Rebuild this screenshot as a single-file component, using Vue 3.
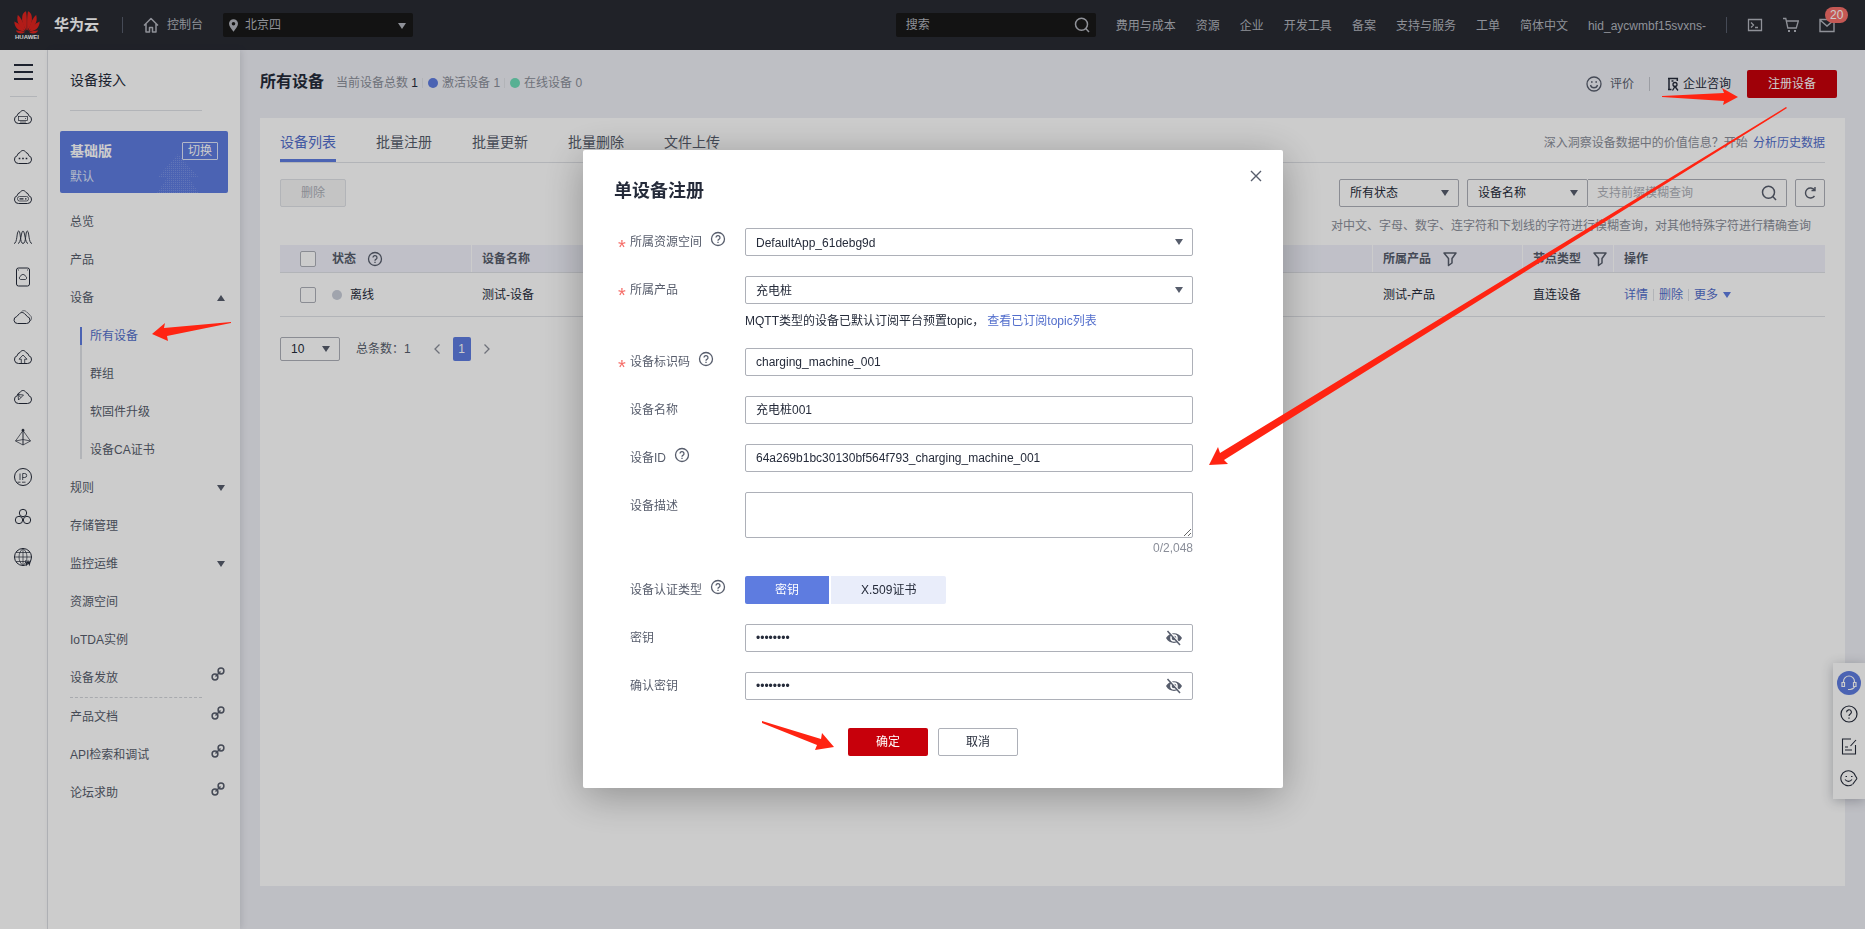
<script setup>
import { ref } from 'vue'

const cloud = '<path d="M5.500 16.500a4 4 0 0 1-1.300-7.800A3.800 3.800 0 0 1 7 5.500c.8-1.500 2-2 3-2s2.200.5 3 2a3.800 3.800 0 0 1 2.800 3.200 4 4 0 0 1-1.300 7.800z"/>'
const railIcons = [
  { name: '弹性云服务器', art: cloud + '<rect stroke-width=".7" x="5.500" y="9.500" width="9" height="4"/><path stroke-width=".7" d="M12 11.500h1M7 15h6"/>' },
  { name: '云服务', art: cloud + '<path stroke-width="1.600" d="M5.700 11.500h1.600M9.200 11.500h1.600M12.700 11.500h1.600"/>' },
  { name: '裸金属服务器', art: cloud + '<rect stroke-width=".7" x="4.500" y="9.500" width="11" height="4.500" rx="2"/><path stroke-width="1.200" d="M6.500 11.800h4M12 11.800h1.500"/>' },
  { name: '弹性伸缩', art: '<path stroke-width=".9" d="M1 16.500c3.500 0 2.500-12.500 4.700-12.500s1 12.500 4.300 12.500S12.300 4 14.300 4s1.200 12.500 4.700 12.500M5 16.500C8 16.500 8 4 10 4s2 12.500 5 12.500"/>' },
  { name: '存储', art: '<rect x="3.500" y="1" width="13" height="18" rx="2"/><path stroke-width=".8" d="M7.500 12.500a1.700 1.700 0 0 1 0-3.200 2.600 2.600 0 0 1 5 0 1.700 1.700 0 0 1 0 3.200zM5 3h1M14 3h1"/>' },
  { name: '云硬盘', art: '<path d="M4.500 16.500a3.500 3.500 0 0 1-.8-6.900c.8-1.200 1.500-1.800 2.300-2.300.8-1.300 2-1.800 3-1.800s2.200.5 3 1.800c1 .5 1.700 1.200 2.300 2.300a3.500 3.500 0 0 1-.8 6.900z"/><path stroke-width=".6" d="M8.500 4.500c1-1 4-1.500 5.500 1 1 .3 2 1.300 2.500 2.500 2.500 1 3 5-.5 6.800"/>' },
  { name: '上传', art: cloud + '<path stroke-width=".8" d="M8.300 16.200v-4H6L10 8l4 4.200h-2.300v4"/>' },
  { name: '云备份', art: cloud + '<path stroke-width=".8" d="M5 7.500l5.500.5-5 5zM5 7.500l2.800 3.100"/>' },
  { name: '虚拟私有云', art: '<path stroke-width=".7" d="M10 3.500L2.500 14 10 18l7.500-4zM2.500 14L10 12.500l7.500 1.500"/><path d="M10 3v15"/><circle cx="10" cy="3.200" r="1" fill="currentColor"/>' },
  { name: '弹性公网IP', art: '<circle cx="10" cy="10" r="8.500"/><path stroke-width=".8" d="M7 6.500v6.500M9.700 13V6.500h2a2 2 0 0 1 0 4h-2M4.500 15.200h3M9 15.200h3.500"/>' },
  { name: '容器', art: '<circle cx="10" cy="6" r="3.700"/><circle cx="6" cy="13" r="3.700"/><circle cx="14" cy="13" r="3.700"/>' },
  { name: '域名', art: '<circle cx="10" cy="10" r="8.500"/><path stroke-width=".7" d="M10 1.500c-5.300 4-5.300 13 0 17M10 1.500c5.300 4 5.300 13 0 17M1.500 10h17M3 5.500h14M3 14.500h9M10 1.500v17"/><path stroke-width="1.100" d="M12.500 13.500l1.200 4 1.300-3.500 1.300 3.500 1.200-4"/>' }
]

const topLinks = ['费用与成本', '资源', '企业', '开发工具', '备案', '支持与服务', '工单', '简体中文', 'hid_aycwmbf15svxns-']
const menu = [
  { label: '总览' },
  { label: '产品' },
  { label: '设备', arrow: 'up', children: ['所有设备', '群组', '软固件升级', '设备CA证书'] },
  { label: '规则', arrow: 'down' },
  { label: '存储管理' },
  { label: '监控运维', arrow: 'down' },
  { label: '资源空间' },
  { label: 'IoTDA实例' },
  { label: '设备发放', link: true },
  { label: '产品文档', link: true, split: true },
  { label: 'API检索和调试', link: true },
  { label: '论坛求助', link: true }
]
const tabs = ['设备列表', '批量注册', '批量更新', '批量删除', '文件上传']

const code = ref('charging_machine_001')
const deviceName = ref('充电桩001')
const deviceId = ref('64a269b1bc30130bf564f793_charging_machine_001')
const description = ref('')
const secret = ref('12345678')
const secretAgain = ref('12345678')
const authType = ref('密钥')
const petals = [
  'M12.700 19.500C9 15 7.500 10 8.200 6 8.500 3 10 .8 12 .3 13 5 13 13 12.700 19.500z',
  'M13.300 19.500C17 15 18.500 10 17.800 6 17.500 3 16 .8 14 .3 13 5 13 13 13.300 19.500z',
  'M11.800 19.800C6 16.500 1.800 11.500 3.800 4 7 6.500 10 13 11.800 19.800z',
  'M14.200 19.800C20 16.500 24.200 11.500 22.200 4 19 6.500 16 13 14.200 19.800z',
  'M11 20.500C5 20.500.5 17 .3 10.500 5 12.500 9 16.500 11 20.500z',
  'M15 20.500C21 20.500 25.500 17 25.700 10.500 21 12.500 17 16.500 15 20.500z',
  'M10.800 21.200C7 23.500 3.500 22.500 1.800 19.500 5 19.300 8 20.300 10.800 21.200z',
  'M15.200 21.200C19 23.500 22.500 22.500 24.200 19.500 21 19.300 18 20.300 15.200 21.200z'
]
</script>

<template>
  <div class="page">
    <svg class="defs" aria-hidden="true">
      <symbol id="help" viewBox="0 0 16 16"><g fill="none" stroke="currentColor" stroke-width="1.300"><circle cx="8" cy="8" r="6.500" /><path d="M6 6.600a2 2 0 1 1 2.900 1.800c-.6.300-.9.600-.9 1.300" /><path d="M8 10.800v1.300" /></g></symbol>
      <symbol id="caret" viewBox="0 0 8 6"><path d="M0 0h8L4 6z" fill="currentColor" /></symbol>
      <symbol id="filter" viewBox="0 0 16 16"><path d="M2 2h12L10 7.500V12l-3.500 2.500v-7z" fill="none" stroke="currentColor" stroke-width="1.500" stroke-linejoin="round" /></symbol>
      <symbol id="search" viewBox="0 0 16 16"><g fill="none" stroke="currentColor" stroke-width="1.500"><circle cx="7.500" cy="7.300" r="6" /><path d="M11.700 11.500l3.300 3.500" /></g></symbol>
      <symbol id="chain" viewBox="0 0 14 14"><g fill="none" stroke="currentColor" stroke-width="1.500"><circle cx="4" cy="10" r="2.900" /><circle cx="10" cy="4" r="2.900" /><path d="M4.500 9.500l5-5" /></g></symbol>
      <symbol id="smile" viewBox="0 0 16 16"><g fill="none" stroke="currentColor" stroke-width="1.300"><circle cx="8" cy="8" r="7" /><path d="M4.500 9a3.600 3.600 0 0 0 7 0" /><path stroke-width="1.600" d="M5 6h1.600M9.400 6H11" /></g></symbol>
      <symbol id="eye-off" viewBox="0 0 18 16"><path d="M1 8c3.500-6.500 12.500-6.500 16 0-3.500 6.500-12.500 6.500-16 0z" fill="currentColor" /><circle cx="9" cy="8" r="3.800" fill="#fff" /><circle cx="9" cy="8" r="2.300" fill="currentColor" /><path d="M4 1l12 14" stroke="#fff" stroke-width="1.500" /><path d="M2.500 1L15 15" stroke="currentColor" stroke-width="1.500" /></symbol>
    </svg>

    <header class="topbar">
      <svg class="logo" viewBox="0 0 26 28" role="img" aria-label="HUAWEI">
        <path v-for="petal in petals" :key="petal" :d="petal" fill="#e0231f" />
        <text x="13" y="28" text-anchor="middle" font-size="6" font-weight="bold" fill="#fff">HUAWEI</text>
      </svg>
      <strong class="brand">华为云</strong>
      <span class="bar-line brand-line"></span>
      <a class="console" href="#">
        <svg viewBox="0 0 16 16"><path d="M1 8.500L8 1.500l7 7M3 7v8h3.500v-4.500h3V15H13V7" fill="none" stroke="currentColor" stroke-width="1.500" stroke-linejoin="round" /></svg>控制台
      </a>
      <div class="region">
        <svg class="pin" viewBox="0 0 10 14"><path fill-rule="evenodd" d="M5 0a5 5 0 0 0-5 5c0 3 3 5.500 5 9 2-3.500 5-6 5-9a5 5 0 0 0-5-5zm0 3a2 2 0 1 1 0 4 2 2 0 0 1 0-4z" fill="currentColor" /></svg>
        <select aria-label="区域"><option>北京四</option></select>
        <svg class="caret"><use href="#caret" /></svg>
      </div>
      <div class="top-search">
        <input type="text" placeholder="搜索" aria-label="搜索">
        <svg><use href="#search" /></svg>
      </div>
      <nav class="top-links"><a v-for="t in topLinks" :key="t" href="#">{{ t }}</a></nav>
      <span class="bar-line"></span>
      <div class="top-icons">
        <button aria-label="CloudShell"><svg viewBox="0 0 16 16"><path d="M1.500 2.500h13v11h-13zM4 5.500L6.500 8 4 10.500M8 10.500h3" fill="none" stroke="currentColor" stroke-width="1.300" /></svg></button>
        <button aria-label="购物车"><svg viewBox="0 0 16 16"><path d="M0 1.500h2.800l2 9.500h8.500l2-7H3.500" fill="none" stroke="currentColor" stroke-width="1.300" /><path d="M5 13h2v2H5zM11 13h2v2h-2z" fill="currentColor" /></svg></button>
        <button class="mail" aria-label="消息"><svg viewBox="0 0 16 16"><path d="M1 2.500h14v12H1zM1 3l7 6 7-6" fill="none" stroke="currentColor" stroke-width="1.400" /></svg><span class="badge">20</span></button>
      </div>
    </header>

    <div class="body">
      <aside class="rail">
        <button class="burger" aria-label="服务列表"><i></i><i></i><i></i></button>
        <a v-for="icon in railIcons" :key="icon.name" href="#" :aria-label="icon.name"><svg viewBox="0 0 20 20" v-html="icon.art"></svg></a>
      </aside>

      <aside class="side">
        <h2>设备接入</h2>
        <div class="edition">
          <svg class="deco" viewBox="0 0 42 39" aria-hidden="true">
            <defs><pattern id="dots" width="2" height="2" patternUnits="userSpaceOnUse"><rect width="1" height="1" fill="#8ea3ea" /></pattern></defs>
            <path d="M21 0L42 24H32L42 39H0L10 24H0z" fill="url(#dots)" />
          </svg>
          <div class="edition-top"><strong>基础版</strong><button>切换</button></div>
          <span>默认</span>
        </div>
        <ul class="menu">
          <li v-for="m in menu" :key="m.label" :class="{ split: m.split }">
            <a class="item" href="#">{{ m.label }}
              <svg v-if="m.arrow" class="caret" :class="m.arrow"><use href="#caret" /></svg>
              <svg v-if="m.link" class="chain"><use href="#chain" /></svg>
            </a>
            <ul v-if="m.children" class="sub">
              <li v-for="(c, i) in m.children" :key="c" :class="{ active: i === 0 }"><a href="#">{{ c }}</a></li>
            </ul>
          </li>
        </ul>
      </aside>

      <main class="main">
        <div class="heading">
          <h1>所有设备</h1>
          <div class="stats">
            <span>当前设备总数 <b>1</b></span><span class="with-dot"><i class="dot blue"></i>激活设备 1</span><span class="with-dot"><i class="dot green"></i>在线设备 0</span>
          </div>
          <a class="rate" href="#"><svg><use href="#smile" /></svg>评价</a>
          <a class="consult" href="#"><svg viewBox="0 0 12 14"><path d="M10.300 4V1.500H2v11h2.500M1 1.500h3M1 12.500h3M4.500 4h2" fill="none" stroke="currentColor" stroke-width="1.500" /><circle cx="8" cy="7.500" r="2" fill="none" stroke="currentColor" stroke-width="1.300" /><path d="M5.500 13.500L8 9.500l3 4" fill="none" stroke="currentColor" stroke-width="1.300" /></svg>企业咨询</a>
          <button class="primary">注册设备</button>
        </div>

        <section class="panel">
          <div class="tabs">
            <button v-for="(t, i) in tabs" :key="t" :class="{ active: i === 0 }">{{ t }}</button>
            <p>深入洞察设备数据中的价值信息？开始 <a href="#">分析历史数据</a></p>
          </div>
          <div class="tools">
            <button class="delete" disabled>删除</button>
            <div class="select state"><select aria-label="状态"><option>所有状态</option></select><svg class="caret"><use href="#caret" /></svg></div>
            <div class="query">
              <div class="select"><select aria-label="查询字段"><option>设备名称</option></select><svg class="caret"><use href="#caret" /></svg></div>
              <div class="keyword"><input type="text" placeholder="支持前缀模糊查询" aria-label="关键字"><svg><use href="#search" /></svg></div>
            </div>
            <button class="refresh" aria-label="刷新"><svg viewBox="0 0 14 14"><path d="M11.500 10a5 5 0 1 1 0-6M12 1v3.500H8.500" fill="none" stroke="currentColor" stroke-width="1.400" /></svg></button>
          </div>
          <p class="hint">对中文、字母、数字、连字符和下划线的字符进行模糊查询，对其他特殊字符进行精确查询</p>
          <table>
            <colgroup><col class="c-check"><col class="c-state"><col><col class="c-product"><col class="c-type"><col class="c-ops"></colgroup>
            <thead>
              <tr>
                <th class="plain"><input type="checkbox" aria-label="全选"></th>
                <th class="first"><span class="head">状态<svg><use href="#help" /></svg></span></th>
                <th>设备名称</th>
                <th><span class="head">所属产品<svg><use href="#filter" /></svg></span></th>
                <th><span class="head">节点类型<svg><use href="#filter" /></svg></span></th>
                <th class="plain">操作</th>
              </tr>
            </thead>
            <tbody>
              <tr>
                <td><input type="checkbox" aria-label="选择 测试-设备"></td>
                <td class="first"><span class="online"><i class="dot gray"></i>离线</span></td>
                <td>测试-设备</td>
                <td>测试-产品</td>
                <td>直连设备</td>
                <td><span class="actions"><a href="#">详情</a><a href="#">删除</a><a href="#">更多 <svg class="caret"><use href="#caret" /></svg></a></span></td>
              </tr>
            </tbody>
          </table>
          <div class="pager">
            <div class="select size"><select aria-label="每页条数"><option>10</option></select><svg class="caret"><use href="#caret" /></svg></div>
            <span class="total">总条数：1</span>
            <button aria-label="上一页"><svg viewBox="0 0 8 12"><path d="M6.500 1.500L2 6l4.500 4.500" fill="none" stroke="currentColor" stroke-width="1.300" /></svg></button>
            <button class="current">1</button>
            <button aria-label="下一页"><svg viewBox="0 0 8 12"><path d="M1.500 1.500L6 6l-4.500 4.500" fill="none" stroke="currentColor" stroke-width="1.300" /></svg></button>
          </div>
        </section>
      </main>
    </div>

    <div class="float-bar">
      <button class="service" aria-label="客服"><svg viewBox="0 0 16 16"><path d="M2.500 8V6.500a5.500 5.500 0 0 1 11 0V8M13.500 11c0 2-2 3-4 3.300M1 7.500h2.500v4H1zM12.500 7.500H15v4h-2.500zM7 14.500h2.500" fill="none" stroke="currentColor" stroke-width="1.200" /></svg></button>
      <button aria-label="帮助"><svg viewBox="0 0 18 18"><g fill="none" stroke="currentColor" stroke-width="1.200"><circle cx="9" cy="9" r="8" /><path d="M6.600 7.200a2.400 2.400 0 1 1 3.500 2.100c-.8.500-1.100.8-1.100 1.700M9 12.500v1.300" /></g></svg></button>
      <button aria-label="建议"><svg viewBox="0 0 18 18"><path d="M11 2H2.500v15h13V8M16 3l-5.500 6M5 10h3M5 13h7" fill="none" stroke="currentColor" stroke-width="1.100" /></svg></button>
      <button aria-label="满意度"><svg viewBox="0 0 18 18"><path d="M15.500 7A7.500 7.500 0 1 0 12 15.800M17 9.500l-4.500 6M5 10.500c2 2.500 5 2.500 7 0M5.500 7.500H7M11 7.500h1.500M15.500 7l1.500 2.500" fill="none" stroke="currentColor" stroke-width="1.100" /></svg></button>
    </div>

    <div class="overlay">
      <form class="dialog" role="dialog" aria-labelledby="dialog-title" @submit.prevent>
        <button type="button" class="close" aria-label="关闭"><svg viewBox="0 0 12 12"><path d="M1 1l10 10M11 1L1 11" stroke="currentColor" stroke-width="1.400" /></svg></button>
        <h2 id="dialog-title">单设备注册</h2>
        <div class="row">
          <span class="star">*</span><label for="space">所属资源空间</label><svg class="tip"><use href="#help" /></svg>
          <div class="control select"><select id="space"><option>DefaultApp_61debg9d</option></select><svg class="caret"><use href="#caret" /></svg></div>
        </div>
        <div class="row">
          <span class="star">*</span><label for="product">所属产品</label>
          <div class="control">
            <div class="select"><select id="product"><option>充电桩</option></select><svg class="caret"><use href="#caret" /></svg></div>
            <p class="note">MQTT类型的设备已默认订阅平台预置topic，<a href="#">查看已订阅topic列表</a></p>
          </div>
        </div>
        <div class="row">
          <span class="star">*</span><label for="code">设备标识码</label><svg class="tip"><use href="#help" /></svg>
          <div class="control"><input id="code" v-model="code" type="text"></div>
        </div>
        <div class="row">
          <span class="star"></span><label for="name">设备名称</label>
          <div class="control"><input id="name" v-model="deviceName" type="text"></div>
        </div>
        <div class="row">
          <span class="star"></span><label for="device-id">设备ID</label><svg class="tip"><use href="#help" /></svg>
          <div class="control"><input id="device-id" v-model="deviceId" type="text"></div>
        </div>
        <div class="row">
          <span class="star"></span><label for="desc">设备描述</label>
          <div class="control"><textarea id="desc" v-model="description"></textarea><p class="count">{{ description.length }}/2,048</p></div>
        </div>
        <div class="row">
          <span class="star"></span><label id="auth">设备认证类型</label><svg class="tip"><use href="#help" /></svg>
          <div class="control toggle" role="group" aria-labelledby="auth">
            <button v-for="a in ['密钥', 'X.509证书']" :key="a" type="button" :class="{ on: a === authType }" @click="authType = a">{{ a }}</button>
          </div>
        </div>
        <div class="row">
          <span class="star"></span><label for="secret">密钥</label>
          <div class="control secret"><input id="secret" v-model="secret" type="password"><button type="button" aria-label="显示密钥"><svg><use href="#eye-off" /></svg></button></div>
        </div>
        <div class="row">
          <span class="star"></span><label for="secret-again">确认密钥</label>
          <div class="control secret"><input id="secret-again" v-model="secretAgain" type="password"><button type="button" aria-label="显示确认密钥"><svg><use href="#eye-off" /></svg></button></div>
        </div>
        <div class="buttons"><button class="primary">确定</button><button type="button" class="cancel">取消</button></div>
      </form>
    </div>

    <svg class="pointers" aria-hidden="true">
      <path d="M231 322L164 328 165 323 152 334 168 341 167 336 231 323z" />
      <path d="M1662 96L1724 93 1722 88 1738 97 1723 105 1724 101 1662 97z" />
      <path d="M1786 107L1220 453 1218 447 1209 465 1228 464 1224 460 1787 108z" />
      <path d="M762 721L821 739 822 733 834 747 815 750 817 745 762 723z" />
    </svg>
  </div>
</template>

<style>
body {
  margin: 0;
}
</style>

<style scoped>
.page {
  position: relative;
  display: flex;
  flex-direction: column;
  min-height: 100vh;
  background: #eeeff5;
  color: #252b3a;
  font: 12px/18px "Liberation Sans", "Noto Sans CJK SC", sans-serif;
}
.page * {
  box-sizing: border-box;
}
.defs {
  position: absolute;
  width: 0;
  height: 0;
}
button, input, select, textarea {
  margin: 0;
  padding: 0;
  border: 0;
  border-radius: 0;
  background: none;
  color: inherit;
  font: inherit;
  outline: none;
}
select {
  appearance: none;
}
a {
  color: #526ecc;
  text-decoration: none;
}
h1, h2, p, ul {
  margin: 0;
  padding: 0;
  list-style: none;
}
svg {
  display: block;
  flex: none;
}
.caret {
  width: 8px;
  height: 6px;
  color: #575d6c;
}

/* top bar */
.topbar {
  display: flex;
  align-items: center;
  height: 50px;
  padding: 0 30px 0 14px;
  background: #282b33;
  color: #b3b6be;
}
.topbar a {
  color: #b3b6be;
}
.logo {
  width: 26px;
  height: 28px;
}
.brand {
  margin-left: 14px;
  color: #fff;
  font-size: 15px;
}
.bar-line {
  width: 1px;
  height: 16px;
  background: #575d6c;
}
.brand-line {
  margin: 0 20px 0 23px;
}
.console {
  display: flex;
  align-items: center;
  gap: 8px;
}
.console svg {
  width: 16px;
  height: 16px;
}
.region, .top-search {
  position: relative;
  height: 24px;
  border-radius: 2px;
  background: #181818;
}
.region {
  width: 190px;
  margin-left: 20px;
}
.region select {
  width: 100%;
  height: 24px;
  padding-left: 22px;
}
.region .pin {
  position: absolute;
  left: 6px;
  top: 6px;
  width: 9px;
  height: 13px;
  pointer-events: none;
}
.region .caret {
  position: absolute;
  right: 7px;
  top: 10px;
  color: #b3b6be;
  pointer-events: none;
}
.top-search {
  display: flex;
  align-items: center;
  width: 200px;
  margin-left: auto;
  padding: 0 6px 0 10px;
}
.top-search input {
  flex: 1;
  min-width: 0;
}
.top-search input::placeholder {
  color: #b3b6be;
}
.top-search svg {
  width: 16px;
  height: 16px;
}
.top-links {
  display: flex;
  gap: 20px;
  margin: 0 20px;
  padding-top: 2px;
}
.top-icons {
  display: flex;
  gap: 20px;
  margin-left: 20px;
}
.top-icons svg {
  width: 16px;
  height: 16px;
}
.mail {
  position: relative;
}
.badge {
  position: absolute;
  left: 6px;
  bottom: 10px;
  padding: 0 5px;
  border-radius: 8px;
  background: #f66f6a;
  color: #fff;
  font-size: 12px;
  line-height: 16px;
}

/* rail and side menu */
.body {
  display: flex;
  flex: 1;
}
.rail {
  display: flex;
  flex-direction: column;
  align-items: center;
  width: 48px;
  padding-right: 1px;
  border-right: 1px solid #dfe1e6;
  background: #fff;
  color: #252b3a;
}
.burger {
  display: flex;
  flex-direction: column;
  gap: 5px;
  width: 27px;
  height: 47px;
  padding: 14px 4px 0;
  border-bottom: 1px solid #dfe1e6;
}
.burger i {
  width: 19px;
  height: 2px;
  background: #252b3a;
}
.rail a {
  display: grid;
  place-items: center;
  height: 40px;
  color: #252b3a;
}
.rail a svg {
  width: 20px;
  height: 20px;
  fill: none;
  stroke: currentColor;
  stroke-width: 1;
}
.side {
  width: 192px;
  padding: 0 12px;
  background: #fff;
  box-shadow: 2px 0 6px rgba(41, 48, 64, 0.12);
  z-index: 1;
}
.side h2 {
  margin: 0 26px 20px 10px;
  padding: 20px 0;
  border-bottom: 1px solid #dfe1e6;
  font-size: 14px;
  font-weight: normal;
  line-height: 20px;
}
.edition {
  position: relative;
  height: 62px;
  padding: 11px 10px 0;
  border-radius: 2px;
  background: #5e7ce0;
  color: #fff;
}
.deco {
  position: absolute;
  right: 29px;
  bottom: 0;
  width: 42px;
  height: 39px;
  opacity: 0.6;
}
.edition-top {
  position: relative;
  display: flex;
  justify-content: space-between;
  align-items: center;
  margin-bottom: 8px;
  font-size: 14px;
  line-height: 18px;
}
.edition button {
  height: 18px;
  padding: 0 5px;
  border: 1px solid #dfe5fa;
  border-radius: 1px;
  font-size: 12px;
  line-height: 16px;
}
.edition > span {
  color: #dfe5fa;
}
.menu {
  margin-top: 10px;
}
.item {
  display: flex;
  align-items: center;
  justify-content: space-between;
  height: 38px;
  padding: 0 3px 0 10px;
  color: #575d6c;
}
.up {
  transform: scaleY(-1);
}
.menu .chain {
  width: 14px;
  height: 22px;
  padding-bottom: 8px;
}
.split::before {
  display: block;
  margin: 0 26px 0 10px;
  border-top: 1px dashed #d3d5da;
  content: "";
}
.sub {
  display: flex;
  flex-direction: column;
  gap: 20px;
  margin: 10px 0 10px 20px;
  padding-left: 8px;
  border-left: 2px solid #dfe1e6;
}
.sub a {
  color: #575d6c;
}
.sub .active {
  margin-left: -10px;
  padding-left: 8px;
  border-left: 2px solid #5e7ce0;
}
.sub .active a {
  color: #526ecc;
}

/* main area */
.main {
  display: flex;
  flex: 1;
  flex-direction: column;
  min-width: 0;
  padding: 0 20px 43px;
}
.heading {
  display: flex;
  align-items: center;
  height: 68px;
  padding-right: 8px;
}
h1 {
  padding-bottom: 4px;
  font-size: 16px;
  line-height: 24px;
}
.stats {
  display: flex;
  margin: 0 auto 2px 12px;
  color: #8a8e99;
}
.stats b {
  color: #252b3a;
  font-weight: normal;
}
.stats .with-dot {
  position: relative;
  display: flex;
  align-items: center;
  gap: 4px;
  margin-left: 4px;
  padding-left: 6px;
}
.stats .with-dot::before {
  position: absolute;
  left: 0;
  width: 1px;
  height: 10px;
  background: #dfe1e6;
  content: "";
}
.dot {
  display: inline-block;
  width: 10px;
  height: 10px;
  border-radius: 50%;
}
.blue {
  background: #5e7ce0;
}
.green {
  background: #6fdcb8;
}
.gray {
  background: #c8cdd9;
}
.rate, .consult {
  display: flex;
  align-items: center;
  color: #575d6c;
}
.rate {
  gap: 8px;
  margin-right: 17px;
  padding-right: 16px;
  background: linear-gradient(#c2c5cc, #c2c5cc) right center / 1px 14px no-repeat;
}
.rate svg {
  width: 16px;
  height: 16px;
}
.consult {
  gap: 4px;
  margin-right: 16px;
  color: #252b3a;
}
.consult svg {
  width: 12px;
  height: 14px;
}
.primary {
  height: 28px;
  border-radius: 2px;
  background: #c7000b;
  color: #fff;
}
.heading .primary {
  width: 90px;
}
.panel {
  flex: 1;
  padding: 0 20px 20px;
  background: #fff;
}
.tabs {
  display: flex;
  gap: 40px;
  height: 45px;
  border-bottom: 1px solid #dfe1e6;
}
.tabs button {
  padding-top: 6px;
  border-bottom: 3px solid transparent;
  color: #575d6c;
  font-size: 14px;
}
.tabs .active {
  border-color: #5e7ce0;
  color: #526ecc;
}
.tabs p {
  margin-left: auto;
  color: #8a8e99;
  line-height: 50px;
}
.tabs a {
  margin-left: 2px;
}
.tools {
  display: flex;
  gap: 8px;
  margin-top: 16px;
}
.delete {
  width: 66px;
  height: 28px;
  margin-right: auto;
  border: 1px solid #dfe1e6;
  border-radius: 2px;
  background: #f5f5f6;
  color: #adb0b8;
}
.select {
  position: relative;
}
.select select {
  display: block;
  width: 100%;
  height: 28px;
  padding-left: 10px;
  border: 1px solid #adb0b8;
  border-radius: 2px;
}
.select .caret {
  position: absolute;
  top: 11px;
  right: 10px;
  pointer-events: none;
}
.state {
  width: 120px;
}
.query {
  display: flex;
}
.query .select {
  width: 121px;
}
.keyword {
  display: flex;
  align-items: center;
  width: 199px;
  padding: 0 9px;
  border: 1px solid #adb0b8;
  border-left: 0;
  border-radius: 0 2px 2px 0;
}
.keyword input {
  flex: 1;
  min-width: 0;
}
.keyword input::placeholder {
  color: #adb0b8;
}
.keyword svg {
  width: 16px;
  height: 16px;
  color: #575d6c;
}
.refresh {
  display: grid;
  place-items: center;
  width: 30px;
  height: 28px;
  border: 1px solid #adb0b8;
  border-radius: 2px;
  color: #575d6c;
}
.refresh svg {
  width: 14px;
  height: 14px;
}
.hint {
  margin: 10px 14px 10px 0;
  color: #8a8e99;
  text-align: right;
}
table {
  width: 100%;
  border-collapse: separate;
  border-spacing: 0;
  table-layout: fixed;
}
.c-check {
  width: 52px;
}
.c-state {
  width: 140px;
}
.c-product {
  width: 150px;
}
.c-type {
  width: 91px;
}
.c-ops {
  width: 211px;
}
th, td {
  padding: 0 0 0 10px;
  border-bottom: 1px solid #dfe1e6;
  text-align: left;
  white-space: nowrap;
}
th {
  height: 28px;
  background: linear-gradient(#fff, #fff) right center / 1px 100% no-repeat #f0f1fa;
  color: #575d6c;
}
th.plain {
  background-image: none;
}
td {
  height: 44px;
}
th:first-child, td:first-child {
  padding-left: 20px;
}
.first {
  padding-left: 0;
}
.head {
  display: flex;
  align-items: center;
  gap: 11px;
}
.head svg {
  width: 16px;
  height: 16px;
}
.online {
  display: flex;
  align-items: center;
  gap: 8px;
}
input[type="checkbox"] {
  display: block;
  width: 16px;
  height: 16px;
  border: 1px solid #adb0b8;
  border-radius: 2px;
  background: #fff;
  appearance: none;
}
.actions {
  display: flex;
}
.actions a {
  display: flex;
  align-items: center;
  gap: 5px;
}
.actions a + a {
  margin-left: 5px;
  padding-left: 6px;
  background: linear-gradient(#dfe1e6, #dfe1e6) left center / 1px 12px no-repeat;
}
.actions .caret {
  color: #5e7ce0;
}
.pager {
  display: flex;
  align-items: center;
  margin-top: 20px;
  color: #575d6c;
}
.size {
  width: 60px;
  margin-right: 16px;
}
.size select {
  height: 24px;
  color: #252b3a;
}
.size .caret {
  top: 9px;
}
.pager .total {
  margin-right: 22px;
}
.pager button svg {
  width: 8px;
  height: 12px;
  color: #8a8e99;
}
.pager .current {
  width: 18px;
  height: 24px;
  margin: 0 12px;
  border-radius: 2px;
  background: #5e7ce0;
  color: #fff;
}

/* floating tools */
.float-bar {
  position: fixed;
  right: 0;
  bottom: 130px;
  display: flex;
  flex-direction: column;
  align-items: center;
  gap: 14px;
  width: 32px;
  padding: 8px 0 12px;
  background: #fff;
  box-shadow: 0 2px 12px rgba(37, 43, 58, 0.3);
  z-index: 2;
}
.float-bar svg {
  width: 18px;
  height: 18px;
}
.float-bar .service {
  display: grid;
  place-items: center;
  width: 24px;
  height: 24px;
  margin-bottom: -4px;
  border-radius: 50%;
  background: #5e7ce0;
  color: #fff;
}
.service svg {
  width: 16px;
  height: 16px;
}

/* dialog */
.overlay {
  position: fixed;
  inset: 0;
  display: flex;
  align-items: flex-start;
  justify-content: center;
  padding: 150px 0 0 1px;
  background: rgba(0, 0, 0, 0.2);
  z-index: 3;
}
.dialog {
  position: relative;
  display: flex;
  flex-direction: column;
  gap: 20px;
  width: 700px;
  padding: 28px 90px 32px 35px;
  border-radius: 2px;
  background: #fff;
  box-shadow: 0 8px 40px rgba(0, 0, 0, 0.3);
}
.dialog h2 {
  margin: 0 0 4px -4px;
  font-size: 18px;
  line-height: 26px;
}
.close {
  position: absolute;
  top: 20px;
  right: 21px;
}
.close svg {
  width: 12px;
  height: 12px;
  color: #575d6c;
}
.row {
  display: flex;
  color: #575d6c;
  line-height: 28px;
}
.star {
  width: 12px;
  height: 28px;
  color: #f66f6a;
  font-size: 20px;
  line-height: 38px;
}
.tip {
  width: 16px;
  height: 16px;
  margin: 3px 0 0 8px;
}
.control {
  width: 448px;
  margin-left: auto;
  color: #252b3a;
}
.control input, textarea {
  display: block;
  width: 100%;
  height: 28px;
  padding: 0 10px;
  border: 1px solid #adb0b8;
  border-radius: 2px;
}
textarea {
  min-height: 46px;
  resize: vertical;
}
.note, .count {
  line-height: 16px;
}
.note {
  padding-top: 9px;
  margin-bottom: -1px;
}
.note a {
  margin-left: 3px;
}
.count {
  padding-top: 2px;
  color: #8a8e99;
  text-align: right;
}
.toggle {
  display: flex;
  gap: 2px;
}
.toggle button {
  height: 28px;
  padding: 0 30px;
  border-radius: 0 2px 2px 0;
  background: #e9edfa;
}
.toggle .on {
  border-radius: 2px 0 0 2px;
  background: #5e7ce0;
  color: #fff;
}
.secret {
  position: relative;
}
.secret button {
  position: absolute;
  top: 6px;
  right: 10px;
}
.secret svg {
  width: 18px;
  height: 16px;
  color: #575d6c;
}
.buttons {
  display: flex;
  justify-content: center;
  gap: 10px;
  margin: 8px -55px 0 0;
}
.buttons button {
  width: 80px;
}
.cancel {
  height: 28px;
  border: 1px solid #adb0b8;
  border-radius: 2px;
}
.pointers {
  position: fixed;
  inset: 0;
  width: 100%;
  height: 100%;
  fill: #ff2412;
  pointer-events: none;
  z-index: 4;
}
</style>
